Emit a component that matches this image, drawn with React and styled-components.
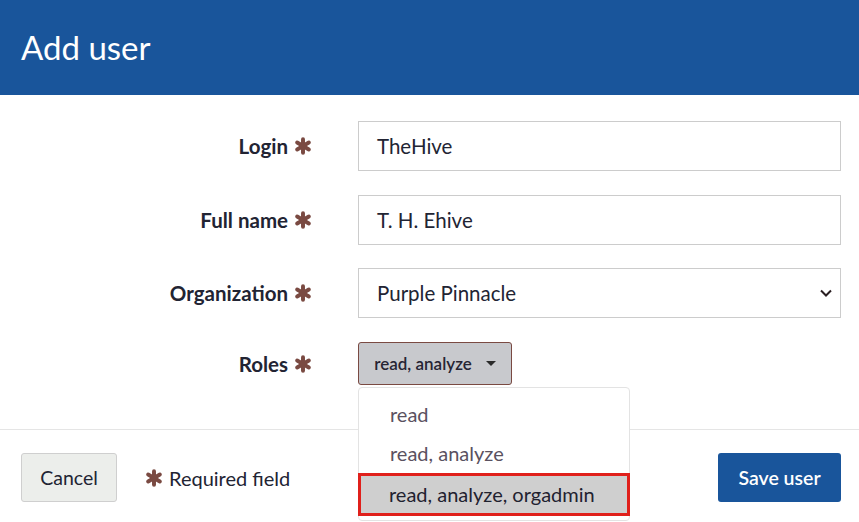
import styled, { createGlobalStyle } from 'styled-components';

const GlobalStyle = createGlobalStyle`
  html, body {
    margin: 0;
    padding: 0;
    background: #fff;
    font-family: "Lato", "Open Sans", sans-serif;
    color: #222;
  }
`;

function Asterisk({ size = 18 }) {
    return (
        <Star viewBox="0 0 20 20" width={size} height={size}>
            <g stroke="#7a4a42" strokeWidth="4.4" strokeLinecap="round">
                <line x1="10" y1="2.5" x2="10" y2="17.5" />
                <line x1="3.5" y1="6.2" x2="16.5" y2="13.8" />
                <line x1="3.5" y1="13.8" x2="16.5" y2="6.2" />
            </g>
            <circle cx="10" cy="10" r="4" fill="#7a4a42" />
        </Star>
    );
}

const rows = [
    { label: 'Login', value: 'TheHive' },
    { label: 'Full name', value: 'T. H. Ehive' },
];

export default function App() {
    return (
        <Page>
            <GlobalStyle />
            <Header>Add user</Header>
            <Body>
                {rows.map((r) => (
                    <Row key={r.label}>
                        <Label>{r.label}<Asterisk /></Label>
                        <Input>{r.value}</Input>
                    </Row>
                ))}
                <Row>
                    <Label>Organization<Asterisk /></Label>
                    <Input>
                        Purple Pinnacle
                        <svg width="14" height="10" viewBox="0 0 14 10">
                            <path d="M2 2.5 L7 7.5 L12 2.5" fill="none" stroke="#2a1f22" strokeWidth="2" />
                        </svg>
                    </Input>
                </Row>
                <Row>
                    <Label $top>Roles<Asterisk /></Label>
                    <RolesWrap>
                        <RolesButton>
                            read, analyze
                            <Caret />
                        </RolesButton>
                        <Menu>
                            <MenuItem>read</MenuItem>
                            <MenuItem>read, analyze</MenuItem>
                            <MenuItem $active>read, analyze, orgadmin</MenuItem>
                        </Menu>
                    </RolesWrap>
                </Row>
            </Body>
            <Footer>
                <CancelButton>Cancel</CancelButton>
                <Required><Asterisk />Required field</Required>
                <SaveButton>Save user</SaveButton>
            </Footer>
        </Page>
    );
}

const Page = styled.div`
    width: 859px;
    height: 522px;
    overflow: hidden;
    display: flex;
    flex-direction: column;
`;

const Header = styled.div`
    height: 95px;
    background: #19559b;
    color: #fff;
    font-size: 33px;
    padding-left: 21px;
    display: flex;
    align-items: center;
    box-sizing: border-box;
    padding-bottom: 1px;
`;

const Body = styled.div`
    height: 335px;
    box-sizing: border-box;
    padding: 26px 18px 0 0;
    display: flex;
    flex-direction: column;
    gap: 23.5px;
    border-bottom: 1px solid #e5e5e5;
    position: relative;
    z-index: 1;
`;

const Row = styled.div`
    display: grid;
    grid-template-columns: 358px 1fr;
    align-items: start;
    height: 50px;
`;

const Label = styled.div`
    height: ${(p) => (p.$top ? '44px' : '50px')};
    display: flex;
    justify-content: flex-end;
    align-items: center;
    gap: 6px;
    padding-right: 46px;
    font-weight: 700;
    font-size: 20.5px;
    color: #222433;
`;

const Star = styled.svg`
    flex: none;
`;

const Input = styled.div`
    height: 50px;
    box-sizing: border-box;
    border: 1px solid #cccccc;
    padding: 0 7px 0 18px;
    display: flex;
    align-items: center;
    justify-content: space-between;
    font-size: 20.5px;
    color: #222433;
`;

const RolesWrap = styled.div`
    position: relative;
`;

const RolesButton = styled.div`
    width: 154px;
    height: 43px;
    box-sizing: border-box;
    background: #c8c9cd;
    border: 1px solid #7a4a42;
    border-radius: 3px;
    display: flex;
    align-items: center;
    justify-content: center;
    gap: 10px;
    font-size: 17px;
    font-weight: 600;
    color: #262433;
`;

const Caret = styled.span`
    width: 0;
    height: 0;
    border-left: 5px solid transparent;
    border-right: 5px solid transparent;
    border-top: 5px solid #2a2a2a;
    margin-left: 4px;
`;

const Menu = styled.div`
    position: absolute;
    left: 0;
    top: 45px;
    width: 272px;
    box-sizing: border-box;
    background: #fff;
    border: 1px solid #e3e3e3;
    border-radius: 4px;
    padding: 7px 0 4px;
    display: flex;
    flex-direction: column;
`;

const MenuItem = styled.div`
    height: ${(p) => (p.$active ? '43px' : '39px')};
    box-sizing: border-box;
    display: flex;
    align-items: center;
    font-size: 20px;
    color: ${(p) => (p.$active ? '#1f2230' : '#5a5160')};
    background: ${(p) => (p.$active ? '#cfcfcf' : 'transparent')};
    border: ${(p) => (p.$active ? '3px solid #e0201b' : 'none')};
    padding-left: ${(p) => (p.$active ? '28px' : '31px')};
    margin: 0 ${(p) => (p.$active ? '-1px' : '0')};
`;

const Footer = styled.div`
    flex: 1;
    display: flex;
    align-items: center;
    padding: 3px 18px 0 21px;
`;

const Button = styled.div`
    height: 49px;
    box-sizing: border-box;
    border-radius: 3px;
    display: flex;
    align-items: center;
    justify-content: center;
    font-size: 19.5px;
`;

const CancelButton = styled(Button)`
    width: 96px;
    background: #eceeeb;
    border: 1px solid #cfcfcf;
    color: #222433;
`;

const SaveButton = styled(Button)`
    width: 123px;
    margin-left: auto;
    background: #19559b;
    color: #fff;
    font-weight: 600;
`;

const Required = styled.div`
    display: flex;
    align-items: center;
    gap: 6px;
    margin-left: 28px;
    font-size: 20px;
    color: #222433;
`;
